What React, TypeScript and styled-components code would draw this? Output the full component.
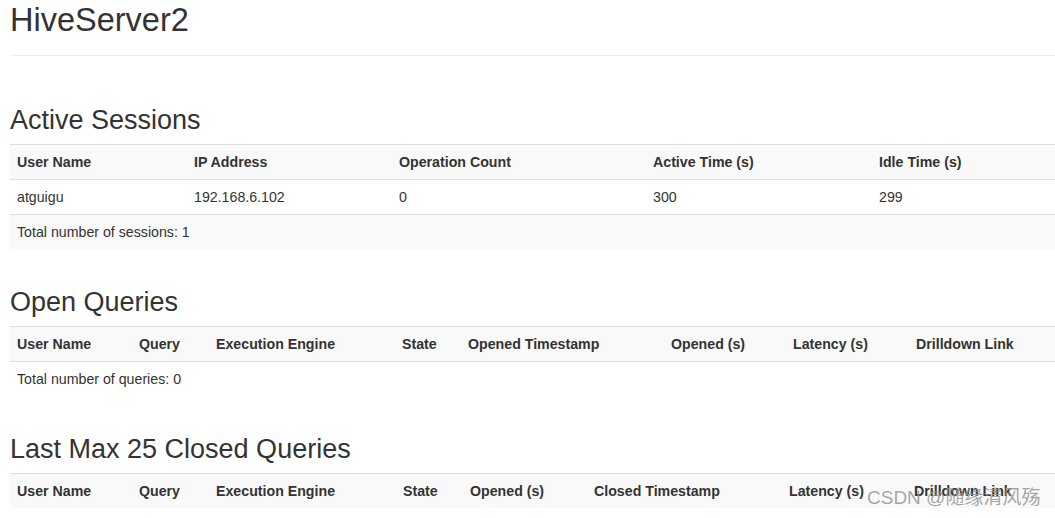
import React from "react";
import styled, { createGlobalStyle } from "styled-components";

const GlobalStyle = createGlobalStyle`
  html, body {
    margin: 0;
    padding: 0;
    overflow: hidden;
    background: #fff;
  }
  body {
    font-family: "Liberation Sans", Arial, sans-serif;
    font-size: 14.2px;
    color: #333;
  }
`;

const Page = styled.div`
  position: relative;
  padding: 0 0 0 10px;
  width: 1045px;
`;

const PageHeader = styled.div`
  padding: 2px 0 17px;
  border-bottom: 1px solid #eee;
  margin-bottom: 49px;
`;

const Title = styled.h1`
  margin: 0;
  font-size: 32.5px;
  line-height: 36px;
  font-weight: 400;
  color: #333;
`;

const Section = styled.section`
  margin-bottom: 38px;
`;

const SectionTitle = styled.h2`
  margin: 0 0 9px;
  font-size: 27px;
  line-height: 30px;
  font-weight: 400;
  color: #333;
`;

const Table = styled.table`
  width: 1045px;
  table-layout: fixed;
  border-collapse: collapse;
  border-spacing: 0;
`;

const Col = styled.col<{ $w: number }>`
  width: ${(p) => p.$w}px;
`;

const Row = styled.tr`
  &:nth-of-type(odd) {
    background: #f9f9f9;
  }
`;

const Th = styled.th`
  padding: 7px;
  line-height: 20px;
  text-align: left;
  font-weight: 700;
  border-top: 1px solid #ddd;
  white-space: nowrap;
  vertical-align: top;
`;

const Td = styled.td`
  padding: 7px;
  line-height: 20px;
  text-align: left;
  border-top: 1px solid #ddd;
  white-space: nowrap;
  vertical-align: top;
`;

const Watermark = styled.div`
  position: absolute;
  left: 867px;
  top: 487px;
  font-family: "Liberation Sans", "Noto Sans CJK SC", sans-serif;
  font-size: 19px;
  line-height: 21px;
  color: rgba(150, 150, 150, 0.85);
  white-space: nowrap;
  pointer-events: none;
`;

type Column = { label: string; w: number };

type TableSpec = {
  title: string;
  columns: Column[];
  rows: string[][];
  footer?: string;
};

const tables: TableSpec[] = [
  {
    title: "Active Sessions",
    columns: [
      { label: "User Name", w: 177 },
      { label: "IP Address", w: 205 },
      { label: "Operation Count", w: 254 },
      { label: "Active Time (s)", w: 226 },
      { label: "Idle Time (s)", w: 183 },
    ],
    rows: [["atguigu", "192.168.6.102", "0", "300", "299"]],
    footer: "Total number of sessions: 1",
  },
  {
    title: "Open Queries",
    columns: [
      { label: "User Name", w: 122 },
      { label: "Query", w: 77 },
      { label: "Execution Engine", w: 186 },
      { label: "State", w: 66 },
      { label: "Opened Timestamp", w: 203 },
      { label: "Opened (s)", w: 122 },
      { label: "Latency (s)", w: 123 },
      { label: "Drilldown Link", w: 146 },
    ],
    rows: [],
    footer: "Total number of queries: 0",
  },
  {
    title: "Last Max 25 Closed Queries",
    columns: [
      { label: "User Name", w: 122 },
      { label: "Query", w: 77 },
      { label: "Execution Engine", w: 187 },
      { label: "State", w: 67 },
      { label: "Opened (s)", w: 124 },
      { label: "Closed Timestamp", w: 195 },
      { label: "Latency (s)", w: 125 },
      { label: "Drilldown Link", w: 148 },
    ],
    rows: [],
  },
];

function DataTable({ spec }: { spec: TableSpec }) {
  return (
    <Section>
      <SectionTitle>{spec.title}</SectionTitle>
      <Table>
        <colgroup>
          {spec.columns.map((c) => (
            <Col key={c.label} $w={c.w} />
          ))}
        </colgroup>
        <tbody>
          <Row>
            {spec.columns.map((c) => (
              <Th key={c.label}>{c.label}</Th>
            ))}
          </Row>
          {spec.rows.map((r, i) => (
            <Row key={i}>
              {r.map((v, j) => (
                <Td key={j}>{v}</Td>
              ))}
            </Row>
          ))}
          {spec.footer && (
            <Row>
              <Td colSpan={spec.columns.length}>{spec.footer}</Td>
            </Row>
          )}
        </tbody>
      </Table>
    </Section>
  );
}

export default function App() {
  return (
    <>
      <GlobalStyle />
      <Page>
        <PageHeader>
          <Title>HiveServer2</Title>
        </PageHeader>
        {tables.map((t) => (
          <DataTable key={t.title} spec={t} />
        ))}
      </Page>
      <Watermark>CSDN @随缘清风殇</Watermark>
    </>
  );
}
